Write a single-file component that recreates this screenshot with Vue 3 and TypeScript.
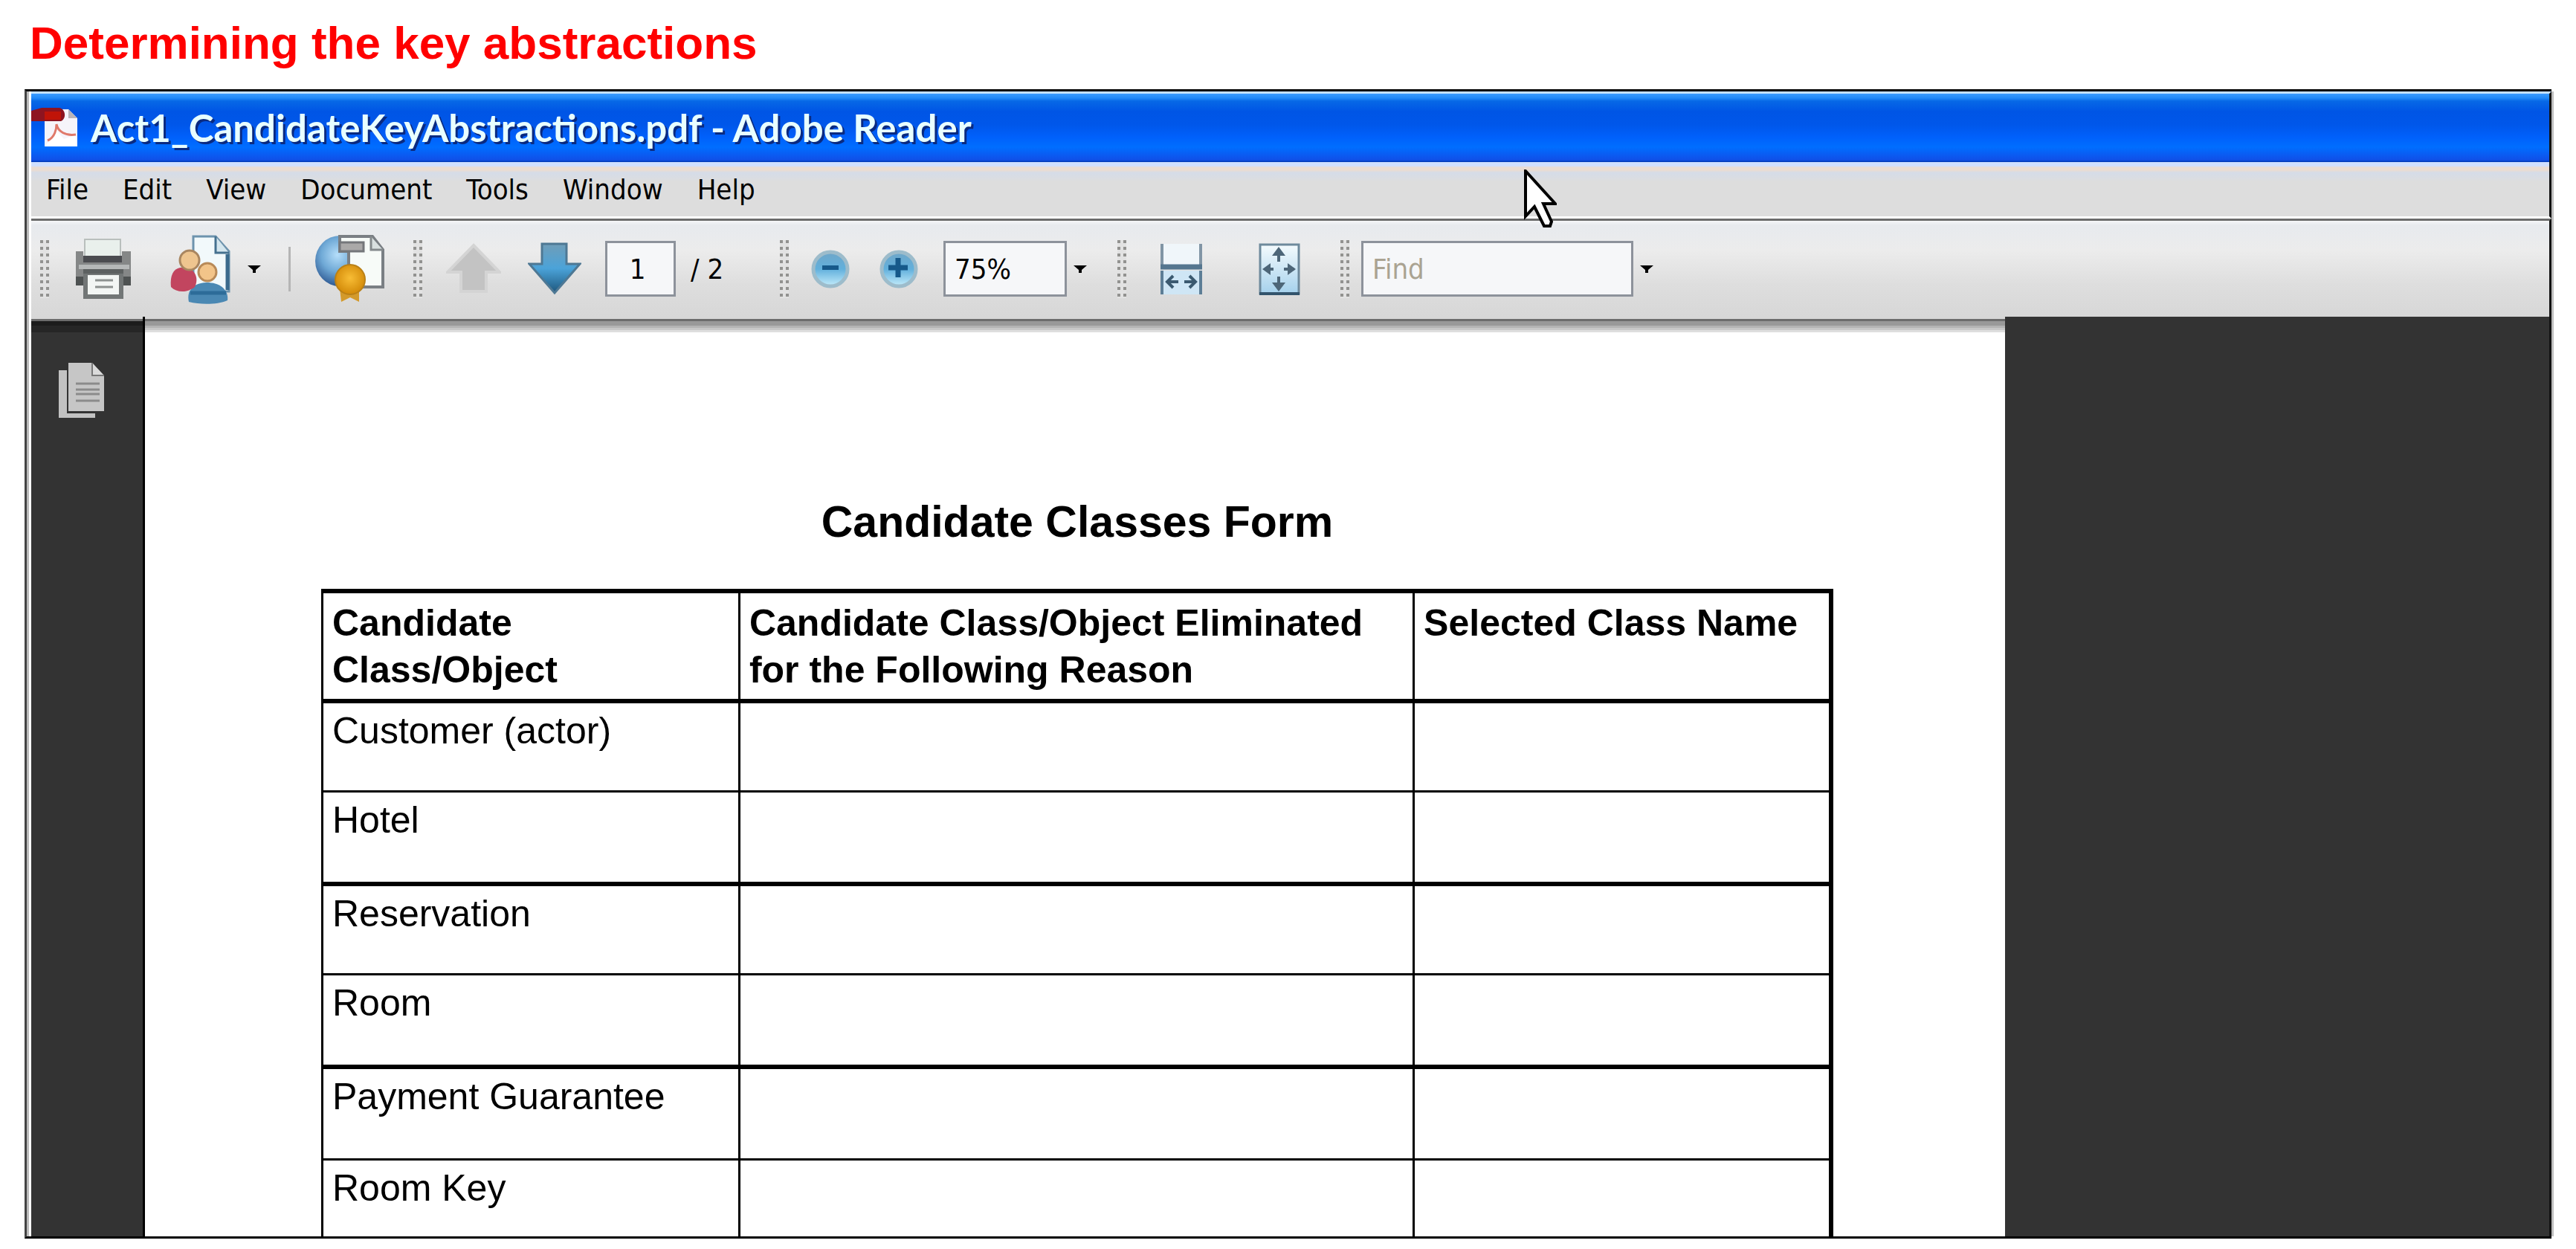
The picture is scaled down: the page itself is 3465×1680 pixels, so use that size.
<script setup lang="ts">
interface Row { name: string }

const menus: string[] = ['File', 'Edit', 'View', 'Document', 'Tools', 'Window', 'Help']
const rows: Row[] = [
  { name: 'Customer (actor)' },
  { name: 'Hotel' },
  { name: 'Reservation' },
  { name: 'Room' },
  { name: 'Payment Guarantee' },
  { name: 'Room Key' },
]
</script>

<template>
  <main class="slide">
    <h1>Determining the key abstractions</h1>

    <section class="window">
      <header class="titlebar">
        <svg class="pdf-icon" viewBox="0 0 64 58" aria-hidden="true">
          <path d="M18 4H50L62 16V54H18Z" fill="#f6f4fa" />
          <path d="M50 4V16H62Z" fill="#b9b4b8" />
          <path d="M20 52L34 32L44 44L60 38V54H20Z" fill="#fff" />
          <path d="M22 46C32 42 34 30 34 24C36 34 46 40 60 38" fill="none" stroke="#e0796a" stroke-width="3" />
          <path d="M0 6L14 2H38C46 4 48 16 40 20H0Z" fill="#8e1420" />
          <path d="M18 7H40V18H18Z" fill="#c01408" />
        </svg>
        <span>Act1_CandidateKeyAbstractions.pdf - Adobe Reader</span>
      </header>

      <nav class="menubar">
        <button v-for="m in menus" :key="m" type="button">{{ m }}</button>
        <svg class="cursor" viewBox="0 0 45 78" aria-hidden="true">
          <path d="M3 2V63L15 50L28 76H36L38 70L27 46H43Z" fill="#fff" stroke="#000" stroke-width="4" />
        </svg>
      </nav>

      <div class="toolbar">
        <i class="grip first"></i>
        <button class="ml32" type="button" aria-label="Print">
          <svg width="84" height="92" viewBox="0 0 84 92">
            <rect x="16" y="6" width="48" height="34" fill="#e9f0ec" stroke="#b9bfbd" stroke-width="2" />
            <path d="M4 22H14V34H66V22H78V68H4Z" fill="#858787" />
            <path d="M14 28H66V37H14Z" fill="#4b4c50" />
            <path d="M8 40H76V46H8Z" fill="#b5b8b8" />
            <path d="M14 46H68V54H14Z" fill="#5d6161" />
            <path d="M4 56H78V68H4Z" fill="#4e5252" />
            <path d="M14 52H68V86H14Z" fill="#727676" />
            <path d="M20 54H62V80H20Z" fill="#f3f6f4" />
            <path d="M30 61H54M30 70H54" stroke="#8d9290" stroke-width="3" />
          </svg>
        </button>
        <button class="ml40" type="button" aria-label="Collaborate">
          <svg width="90" height="96" viewBox="0 0 90 96">
            <path d="M38 4H68L86 24V78H38Z" fill="#f2f9fb" stroke="#6d93ad" stroke-width="3" />
            <path d="M68 4V26H86" fill="#d4e6ee" stroke="#45718f" stroke-width="3" />
            <path d="M84 28V76" stroke="#3b6a8c" stroke-width="5" />
            <path d="M32 92C28 74 42 66 56 66C74 66 86 76 84 90C70 96 48 96 32 92Z" fill="#4a88b3" />
            <path d="M34 80H82" stroke="#2d6c99" stroke-width="5" />
            <path d="M8 72C6 52 14 44 28 46C40 48 46 60 40 72C30 80 16 80 8 72Z" fill="#c2455f" />
            <circle cx="33" cy="36" r="13" fill="#eec58f" stroke="#a98660" stroke-width="3" />
            <circle cx="57" cy="52" r="12" fill="#f2c489" stroke="#b88a58" stroke-width="3" />
          </svg>
        </button>
        <button class="ml20" type="button" aria-label="Collaborate options">
          <svg width="20" height="12" viewBox="0 0 20 12"><path d="M1 1H19L12 7V11H8V7Z" /></svg>
        </button>
        <i class="divider"></i>
        <button class="ml32" type="button" aria-label="Web">
          <svg width="97" height="96" viewBox="0 0 97 96">
            <defs>
              <radialGradient id="globe" cx="45%" cy="38%" r="60%">
                <stop offset="0" stop-color="#b5defa" /><stop offset=".55" stop-color="#6fa9d6" /><stop offset="1" stop-color="#325e97" />
              </radialGradient>
              <radialGradient id="gold" cx="50%" cy="45%" r="60%">
                <stop offset="0" stop-color="#f8bd35" /><stop offset="1" stop-color="#cf8504" />
              </radialGradient>
            </defs>
            <ellipse cx="34" cy="37" rx="33" ry="34" fill="url(#globe)" />
            <path d="M34 4H78L92 22V72H46V24H34Z" fill="#f7fbf8" stroke="#7a7f84" stroke-width="4" />
            <path d="M34 12H66V24H34Z" fill="#aaa9a8" stroke="#74777a" stroke-width="3" />
            <path d="M76 4V22H92" fill="#d9e0e0" stroke="#84898c" stroke-width="3" />
            <path d="M34 74H60V92L48 86L36 92Z" fill="#d39a2c" />
            <circle cx="48" cy="62" r="20" fill="url(#gold)" stroke="#b98017" stroke-width="2" />
          </svg>
        </button>
        <i class="grip ml36"></i>
        <button class="ml32" type="button" aria-label="Previous page" disabled>
          <svg width="74" height="72" viewBox="0 0 74 72">
            <path d="M37 4L72 40H54V66H20V40H2Z" fill="#c3c3c3" stroke="#d4d4d4" stroke-width="4" />
          </svg>
        </button>
        <button class="ml36" type="button" aria-label="Next page">
          <svg width="72" height="72" viewBox="0 0 72 72">
            <defs>
              <linearGradient id="down" x1="0" y1="0" x2="0" y2="1">
                <stop offset="0" stop-color="#6f9db8" /><stop offset=".5" stop-color="#4ba3d9" /><stop offset="1" stop-color="#1d567c" />
              </linearGradient>
            </defs>
            <path d="M19 2H52V29H70L36 68L2 29H19Z" fill="url(#down)" stroke="#4e7894" stroke-width="3" />
          </svg>
        </button>
        <input class="field page-no ml32" type="text" value="1" aria-label="Page number" />
        <span class="total ml20">/ 2</span>
        <i class="grip"></i>
        <button class="ml28" type="button" aria-label="Zoom out">
          <svg width="56" height="60" viewBox="0 0 56 60">
            <defs>
              <linearGradient id="ball" x1="0" y1="0" x2="0" y2="1">
                <stop offset="0" stop-color="#6fa6c8" /><stop offset=".5" stop-color="#62b0dc" /><stop offset="1" stop-color="#c3ecfb" />
              </linearGradient>
            </defs>
            <circle cx="28" cy="30" r="23" fill="url(#ball)" stroke="#9dbccb" stroke-width="5" />
            <path d="M17 28H39" stroke="#16598a" stroke-width="6" />
          </svg>
        </button>
        <button class="ml36" type="button" aria-label="Zoom in">
          <svg width="56" height="60" viewBox="0 0 56 60">
            <circle cx="28" cy="30" r="23" fill="url(#ball)" stroke="#9dbccb" stroke-width="5" />
            <path d="M14 28H40M27 15V41" stroke="#16598a" stroke-width="7" />
          </svg>
        </button>
        <input class="field zoom ml32" type="text" value="75%" aria-label="Zoom level" />
        <button class="ml8" type="button" aria-label="Zoom presets">
          <svg width="20" height="12" viewBox="0 0 20 12"><path d="M1 1H19L12 7V11H8V7Z" /></svg>
        </button>
        <i class="grip ml40"></i>
        <button class="ml44" type="button" aria-label="Fit width">
          <svg width="60" height="76" viewBox="0 0 60 76">
            <path d="M4 4H56V32H4Z" fill="#f0f6fa" />
            <path d="M4 4V32M56 4V32" stroke="#8195a5" stroke-width="4" />
            <path d="M2 35H58" stroke="#55768f" stroke-width="7" />
            <path d="M4 40H56V72H4Z" fill="#cfe6f5" />
            <path d="M4 40V72M56 40V72" stroke="#5d7e96" stroke-width="4" />
            <path d="M12 55H26M34 55H48M19 47L11 55L19 63M41 47L49 55L41 63" fill="none" stroke="#3b5a70" stroke-width="4" />
          </svg>
        </button>
        <button class="ml72" type="button" aria-label="Fit page">
          <svg width="60" height="76" viewBox="0 0 60 76">
            <defs>
              <linearGradient id="sheet" x1="0" y1="0" x2="0" y2="1">
                <stop offset="0" stop-color="#f4fbfd" /><stop offset="1" stop-color="#a5d1ec" />
              </linearGradient>
            </defs>
            <path d="M4 5H56V71H4Z" fill="url(#sheet)" stroke="#6e8a9c" stroke-width="3" />
            <path d="M3 71H57" stroke="#33546c" stroke-width="4" />
            <path d="M29 12V28M29 48V64M10 38H22M36 38H50" stroke="#4d6678" stroke-width="4" />
            <path d="M20 20L29 8L38 20ZM20 56L29 68L38 56ZM18 30L7 38L18 46ZM41 30L52 38L41 46Z" fill="#4d6678" />
          </svg>
        </button>
        <i class="grip ml52"></i>
        <input class="field find ml16" type="text" placeholder="Find" aria-label="Find" />
        <button class="ml8" type="button" aria-label="Find options">
          <svg width="20" height="12" viewBox="0 0 20 12"><path d="M1 1H19L12 7V11H8V7Z" /></svg>
        </button>
      </div>

      <div class="viewer">
        <aside class="sidebar">
          <button type="button" aria-label="Pages">
            <svg width="64" height="78" viewBox="0 0 64 78">
              <path d="M1 12H12V70H50V76H1Z" fill="#c2c2c2" />
              <path d="M14 2H46L62 20V67H14Z" fill="#c6c6c6" />
              <path d="M46 2V19H62" fill="#dadada" stroke="#777" stroke-width="2" />
              <path d="M24 30H56M24 38H56M24 44H56M24 53H56" stroke="#8b8b8b" stroke-width="3" />
            </svg>
          </button>
        </aside>
        <article class="page">
          <h2>Candidate Classes Form</h2>
          <table>
            <colgroup><col class="c1" /><col class="c2" /><col class="c3" /></colgroup>
            <thead>
              <tr>
                <th scope="col">Candidate<br />Class/Object</th>
                <th scope="col">Candidate Class/Object Eliminated<br />for the Following Reason</th>
                <th scope="col">Selected Class Name</th>
              </tr>
            </thead>
            <tbody>
              <tr v-for="r in rows" :key="r.name">
                <td>{{ r.name }}</td>
                <td></td>
                <td></td>
              </tr>
            </tbody>
          </table>
        </article>
        <div class="gutter"></div>
      </div>
    </section>
  </main>
</template>

<style>
body { margin: 0; background: #fff; }
</style>

<style scoped>
.slide { padding: 22px 33px 14px; font-family: "Liberation Sans", Arial, sans-serif; color: #000; }
h1 { margin: 0 0 26px 7px; font-size: 62px; line-height: 72px; font-weight: 700; color: #f00; white-space: nowrap; }

.window { border: 3px solid #000; border-left-color: #444; border-right: 0; padding-left: 6px; box-shadow: inset 3px 0 #bbb; }
.titlebar, .menubar, .toolbar, .viewer { border-right: 3px solid #111; box-shadow: 3px 0 #bebebe; }

.titlebar {
  display: flex; align-items: center; height: 92px; border-top: 3px solid #c3e0ff;
  background: linear-gradient(#3a9cff 0, #2088f8 6px, #0768e6 10px, #0055e5 24px, #0057ea 42px, #0060fb 58px, #006eff 72px, #0a5cf2 82px, #1050e8 89px, #0038b0 92px);
}
.pdf-icon { width: 64px; height: 58px; }
.titlebar span {
  margin-left: 16px; font: 700 51px/60px Lato, "Liberation Sans", sans-serif; color: #e8ffff;
  text-shadow: 3px 3px #0a2a80; white-space: nowrap;
}

.menubar {
  position: relative; display: flex; gap: 46px; height: 73px; padding-left: 20px; border-bottom: 3px solid #fff;
  background: linear-gradient(#cfdfff 0, #cfdfff 5px, #eadcd2 7px, #eadcd2 11px, #d5dce8 14px, #dadde2 22px, #ddd 26px, #ddd 100%);
}
button { display: block; flex: none; padding: 0; border: 0; background: none; }
button svg { display: block; }
.menubar button, .field, .total { font: 38px/48px "DejaVu Sans Condensed", "DejaVu Sans", sans-serif; color: #000; }
.menubar button { align-self: center; }
.cursor { position: absolute; left: 2007px; top: 10px; width: 45px; height: 78px; z-index: 1; }

.toolbar {
  display: flex; align-items: center; height: 129px; border-top: 3px solid #6c6c6c;
  background: linear-gradient(#f5f6f8 0, #e7eaee 6px, #ececec 40px, #dedede 85px, #d7d7d7 129px);
}
.grip {
  flex: none; width: 12px; height: 78px;
  background: repeating-linear-gradient(#0000 0 4px, #e2e2e2 4px 9px), linear-gradient(90deg, #929290 4px, #e2e2e2 4px 8px, #929290 8px);
}
.grip.first { margin-left: 12px; }
.divider { flex: none; width: 3px; height: 60px; margin-left: 36px; background: #b5b5b5; }
.ml8 { margin-left: 8px; }
.ml16 { margin-left: 16px; }
.ml20 { margin-left: 20px; }
.ml28 { margin-left: 28px; }
.ml32 { margin-left: 32px; }
.ml36 { margin-left: 36px; }
.ml40 { margin-left: 40px; }
.ml44 { margin-left: 44px; }
.ml52 { margin-left: 52px; }
.ml72 { margin-left: 72px; }
.field { box-sizing: border-box; flex: none; height: 75px; padding: 0 12px; border: 3px solid #8d929b; border-radius: 0; background: #f6f7f9; }
.page-no { width: 95px; padding: 0 8px 0 0; text-align: center; }
.zoom { width: 166px; }
.find { width: 366px; }
.find::placeholder { color: #aaa392; opacity: 1; }
.total { flex: none; width: 120px; white-space: nowrap; }

.viewer { display: grid; grid-template-columns: 153px 2502fr 732fr; }
.sidebar {
  box-sizing: border-box; padding: 60px 0 0 36px; border-right: 3px solid #000;
  background: linear-gradient(#d7d7d7 3px, #6c6c6c 3px 6px, #1c1c1c 6px 12px, #262626 12px 21px, #333 21px);
}
.page {
  padding: 242px 231px 0 237px;
  background: linear-gradient(#d7d7d7 3px, #6c6c6c 3px 6px, #999 6px 12px, #b4b4b4 12px 15px, #c8c8c8 15px 18px, #dedede 18px 21px, #fff 21px);
}
.gutter { background: #333; }
h2 { margin: 0 0 56px; font-size: 59px; line-height: 68px; font-weight: 700; text-align: center; white-space: nowrap; }

table { width: 100%; table-layout: fixed; border-collapse: separate; border-spacing: 0; border: solid #000; border-width: 6px 6px 0 3px; font-size: 50px; line-height: 63px; }
.c1 { width: 27.7%; }
.c2 { width: 44.8%; }
th, td { box-sizing: border-box; text-align: left; vertical-align: top; border: 0 solid #000; border-right-width: 3px; white-space: nowrap; }
th:last-child, td:last-child { border-right-width: 0; }
th { padding: 9px 12px 7px; border-bottom-width: 6px; }
td { height: 120px; padding: 6px 12px 0; border-bottom-width: 3px; }
tr:nth-child(even) td { height: 126px; border-bottom-width: 6px; }
tr:nth-child(5) td { height: 123px; }
tr:last-child td { height: 102px; border-bottom-width: 0; }
</style>
